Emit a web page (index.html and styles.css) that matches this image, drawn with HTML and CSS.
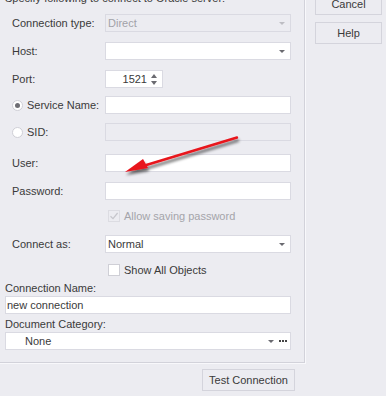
FILE: index.html
```html
<!DOCTYPE html>
<html>
<head>
<meta charset="utf-8">
<link rel="stylesheet" href="styles.css">
</head>
<body>
<div class="dialog">
  <div class="panel">
    <div class="intro">Specify following to connect to Oracle server:</div>
    <div class="row r-type">
      <span class="label">Connection type:</span>
      <div class="field combo disabled"><span class="val">Direct</span><span class="tri"></span></div>
    </div>
    <div class="row r-host">
      <span class="label">Host:</span>
      <div class="field combo"><span class="val"></span><span class="tri"></span></div>
    </div>
    <div class="row r-port">
      <span class="label">Port:</span>
      <div class="field port"><span class="val num">1521</span><span class="spin"><span class="up"></span><span class="down"></span></span></div>
    </div>
    <div class="row r-svc">
      <span class="label radio-label"><span class="radio checked"></span>Service Name:</span>
      <div class="field"></div>
    </div>
    <div class="row r-sid">
      <span class="label radio-label"><span class="radio"></span>SID:</span>
      <div class="field disabled"></div>
    </div>
    <div class="row r-user">
      <span class="label">User:</span>
      <div class="field"></div>
    </div>
    <div class="row r-pass">
      <span class="label">Password:</span>
      <div class="field"></div>
    </div>
    <div class="row r-allow">
      <span class="label"></span>
      <span class="check disabled"><svg width="10" height="10" viewBox="0 0 10 10"><path d="M1.5 5.2 L4 7.6 L8.6 2" fill="none" stroke="#c6c6cc" stroke-width="1.3"/></svg></span>
      <span class="check-text muted">Allow saving password</span>
    </div>
    <div class="row r-as">
      <span class="label">Connect as:</span>
      <div class="field combo"><span class="val left">Normal</span><span class="tri"></span></div>
    </div>
    <div class="row r-show">
      <span class="label"></span>
      <span class="check"></span>
      <span class="check-text">Show All Objects</span>
    </div>
    <div class="plain-label l-name">Connection Name:</div>
    <div class="field wide">new connection</div>
    <div class="plain-label l-cat">Document Category:</div>
    <div class="field wide combo cat"><span class="val none">None</span><span class="tri"></span><span class="dots"><i></i><i></i><i></i></span></div>
  </div>
  <div class="side">
    <div class="btn">Cancel</div>
    <div class="btn">Help</div>
  </div>
</div>
<div class="footer">
  <div class="btn test">Test Connection</div>
</div>
<svg class="arrow" width="386" height="396" viewBox="0 0 386 396">
  <defs>
    <filter id="sh" x="-20%" y="-50%" width="140%" height="200%">
      <feGaussianBlur in="SourceAlpha" stdDeviation="1.6"/>
      <feOffset dx="1" dy="3"/>
      <feComponentTransfer><feFuncA type="linear" slope="0.6"/></feComponentTransfer>
      <feMerge><feMergeNode/><feMergeNode in="SourceGraphic"/></feMerge>
    </filter>
  </defs>
  <g filter="url(#sh)">
    <line x1="237" y1="137.5" x2="143" y2="166" stroke="#e8151b" stroke-width="2.4" stroke-linecap="round"/>
    <polygon points="125,172 143,159 148,168" fill="#e8151b"/>
  </g>
</svg>
</body>
</html>
```

FILE: styles.css
```css
html, body {
  margin: 0;
  padding: 0;
  background: #ececf1;
  width: 386px;
  height: 396px;
  overflow: hidden;
}
body {
  font-family: "Liberation Sans", Arial, sans-serif;
  font-size: 11px;
  color: #3a3a3a;
  position: relative;
}
.dialog {
  display: flex;
  align-items: flex-start;
  margin-top: -10px;
}
.panel {
  width: 307px;
  margin-left: -2px;
  padding-left: 7px;
  box-sizing: border-box;
  border-right: 1px solid #d2d2da;
  border-bottom: 1px solid #d2d2da;
  box-shadow: 1px 1px 0 #f8f8fb;
  padding-bottom: 12px;
}
.intro {
  height: 14px;
  line-height: 14px;
  margin-top: 1px;
}
.row {
  display: flex;
  align-items: center;
  height: 18px;
  padding-left: 7px;
}
.label {
  width: 93px;
  flex: none;
  display: flex;
  align-items: center;
}
.field {
  width: 186px;
  height: 18px;
  box-sizing: border-box;
  border: 1px solid #dadae2;
  background: #fff;
  display: flex;
  align-items: center;
  position: relative;
}
.field.disabled {
  background: #ececf1;
}
.field .val {
  flex: 1;
  padding-left: 2px;
}
.field.disabled .val { color: #a2a2a8; }
.tri {
  width: 0;
  height: 0;
  border-left: 3px solid transparent;
  border-right: 3px solid transparent;
  border-top: 3px solid #6a6a70;
  margin-right: 5px;
}
.field.disabled .tri { border-top-color: #bdbdc3; }
.r-type { margin-top: 9px; }
.r-host { margin-top: 10px; }
.r-port { margin-top: 10px; }
.r-svc { margin-top: 8px; }
.r-sid { margin-top: 9px; }
.r-user { margin-top: 13px; }
.r-pass { margin-top: 10px; }
.r-allow { margin-top: 7px; }
.r-as { margin-top: 10px; }
.r-show { margin-top: 8px; }
.port { width: 58px; }
.port .num {
  text-align: right;
  padding-right: 4px;
}
.spin {
  display: flex;
  flex-direction: column;
  gap: 3px;
  margin-right: 5px;
}
.up, .down {
  width: 0;
  height: 0;
  border-left: 3px solid transparent;
  border-right: 3px solid transparent;
}
.up { border-bottom: 4px solid #6a6a70; }
.down { border-top: 4px solid #6a6a70; }
.radio {
  width: 9px;
  height: 9px;
  border: 1px solid #cfcfd6;
  border-radius: 50%;
  background: #fff;
  margin-right: 4px;
  position: relative;
  flex: none;
}
.radio.checked::after {
  content: "";
  position: absolute;
  left: 2px;
  top: 2px;
  width: 5px;
  height: 5px;
  border-radius: 50%;
  background: #6e6e74;
}
.check {
  width: 10px;
  height: 10px;
  border: 1px solid #cfcfd6;
  background: #fff;
  margin-left: 3px;
  margin-right: 4px;
  display: flex;
  align-items: center;
  justify-content: center;
}
.check.disabled { background: #ececf1; border-color: #dcdce2; }
.check-text { white-space: nowrap; }
.muted { color: #a4a4aa; }
.field .left { padding-left: 2px; }
.plain-label {
  height: 14px;
  line-height: 14px;
}
.l-name { margin-top: 2px; }
.field.wide {
  width: 286px;
  margin-top: 1px;
  padding-left: 1px;
}
.l-cat { margin-top: 3px; }
.cat .none { padding-left: 18px; }
.cat .tri { margin-right: 5px; }
.dots {
  display: flex;
  gap: 1px;
  margin-right: 3px;
}
.dots i {
  display: block;
  width: 2px;
  height: 2px;
  background: #444;
}
.side {
  display: flex;
  flex-direction: column;
  gap: 7px;
  margin-left: 10px;
  margin-top: 3px;
}
.btn {
  width: 67px;
  height: 22px;
  box-sizing: border-box;
  border: 1px solid #d4d4dc;
  display: flex;
  align-items: center;
  justify-content: center;
  background: #ececf1;
}
.footer {
  display: flex;
  padding-left: 202px;
  margin-top: 6px;
}
.btn.test {
  width: 93px;
}
.arrow {
  position: absolute;
  left: 0;
  top: 0;
  pointer-events: none;
}
```
